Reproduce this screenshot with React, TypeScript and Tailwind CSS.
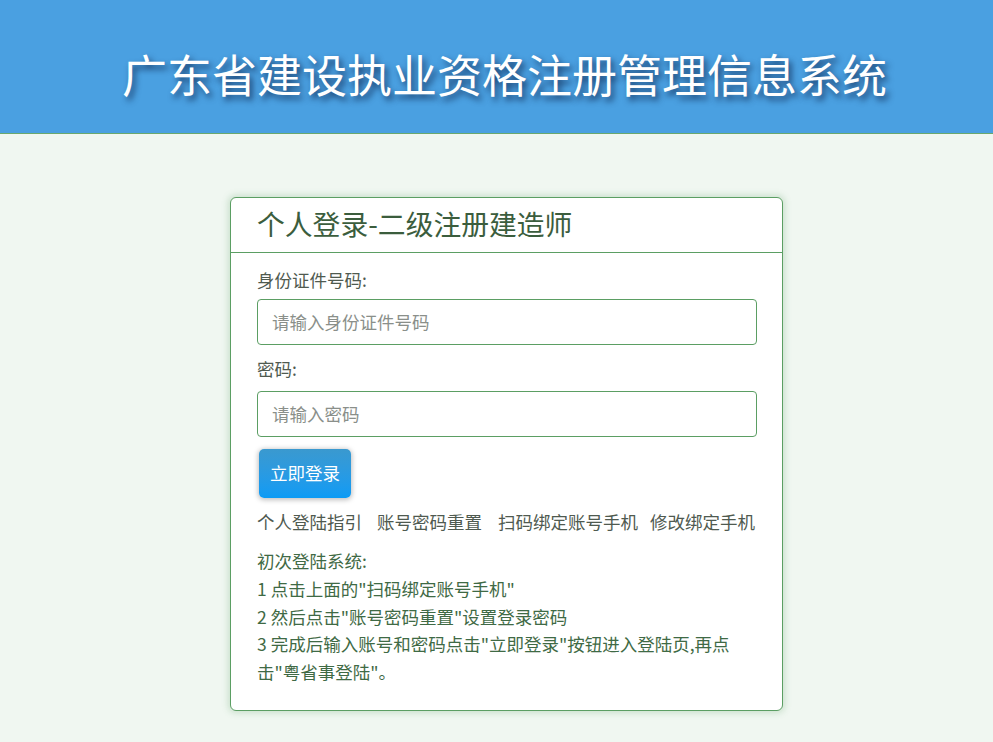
import React from "react";

const font = { fontFamily: '"Noto Sans CJK SC", "Noto Sans", sans-serif' };

export default function App() {
  return (
    <div className="min-h-[742px] w-full bg-[#f0f7f1]" style={font}>
      <div className="h-[134px] bg-[#4aa0e1] border-b border-[#6aa86e] flex items-center pl-[122px]">
        <h1
          className="text-[45px] leading-none text-white font-normal mt-[14px]"
          style={{ textShadow: "3px 4px 6px rgba(10,30,70,0.75)" }}
        >
          广东省建设执业资格注册管理信息系统
        </h1>
      </div>

      <div className="ml-[230px] mt-[63px] w-[553px] bg-white border border-[#5b9e63] rounded-[6px] shadow-[0_0_6px_2px_rgba(90,160,100,0.25)]">
        <div className="h-[55px] border-b border-[#5b9e63] flex items-center pl-[26px]">
          <div className="text-[27.8px] leading-none text-[#3b5d3d] mt-[-3px]">个人登录-二级注册建造师</div>
        </div>
        <div className="px-[26px] pt-[15px] pb-[24px] text-[17.5px] text-[#4f5a50]">
          <div className="leading-[24px]">身份证件号码:</div>
          <div className="mt-[7px] w-[500px] h-[46px] border border-[#5b9e63] rounded-[4px] flex items-center pl-[14px] text-[#8a8f8a]">
            请输入身份证件号码
          </div>
          <div className="mt-[12px] leading-[24px]">密码:</div>
          <div className="mt-[10px] w-[500px] h-[46px] border border-[#5b9e63] rounded-[4px] flex items-center pl-[14px] text-[#8a8f8a]">
            请输入密码
          </div>
          <div className="mt-[12px] ml-[2px] w-[92px] h-[49px] rounded-[5px] bg-gradient-to-b from-[#3a99cf] to-[#0a9bf5] shadow-[0_1px_5px_1px_rgba(0,0,0,0.25)] flex items-center justify-center text-white">
            立即登录
          </div>
          <div className="mt-[12px] leading-[24px] flex text-[#4f5a50]">
            <span>个人登陆指引</span>
            <span className="ml-[15px]">账号密码重置</span>
            <span className="ml-[16px]">扫码绑定账号手机</span>
            <span className="ml-[12px]">修改绑定手机</span>
          </div>
          <div className="mt-[13px] leading-[27.8px] text-[#3f6a45] w-[480px]">
            <div>初次登陆系统:</div>
            <div>1 点击上面的"扫码绑定账号手机"</div>
            <div>2 然后点击"账号密码重置"设置登录密码</div>
            <div>3 完成后输入账号和密码点击"立即登录"按钮进入登陆页,再点击"粤省事登陆"。</div>
          </div>
        </div>
      </div>
    </div>
  );
}
